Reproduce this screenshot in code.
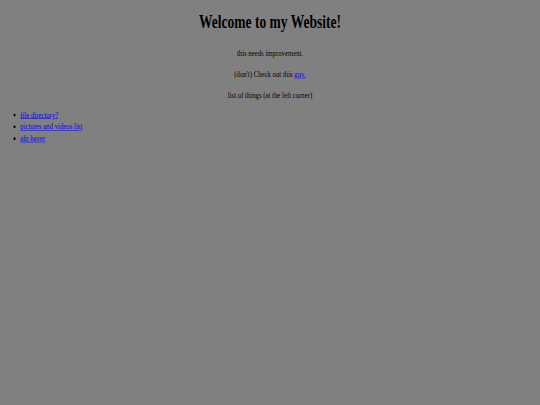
import React from 'react';

// The page is laid out at its original 1280x720 size and scaled down into the 540x405 frame.
const links = ['file directory?', 'pictures and videos list', 'alp haver'];

const App: React.FC = () => {
    return (
        <div className="w-[540px] h-[405px] overflow-hidden bg-[#808080]">
            <div
                className="w-[1280px] h-[720px] origin-top-left scale-x-[0.421875] scale-y-[0.5625] px-[8px] pt-[21px] text-black text-[16px] leading-[18px]"
                style={{ fontFamily: '"Liberation Serif", "Times New Roman", serif' }}
            >
                <h1 className="text-center text-[32px] leading-[37px] font-bold">Welcome to my Website!</h1>

                <p className="text-center mt-[28px]">this needs improvement.</p>
                <p className="text-center mt-[19px]">
                    (don't) Check out this <a href="#" className="text-[#0000ee] underline">guy.</a>
                </p>
                <p className="text-center mt-[19px]">list of things (at the left corner)</p>

                <ul className="list-disc pl-[40px] mt-[15px] leading-[21px]">
                    {links.map(label => (
                        <li key={label}>
                            <a href="#" className="text-[#0000ee] underline">{label}</a>
                        </li>
                    ))}
                </ul>
            </div>
        </div>
    );
};

export default App;
